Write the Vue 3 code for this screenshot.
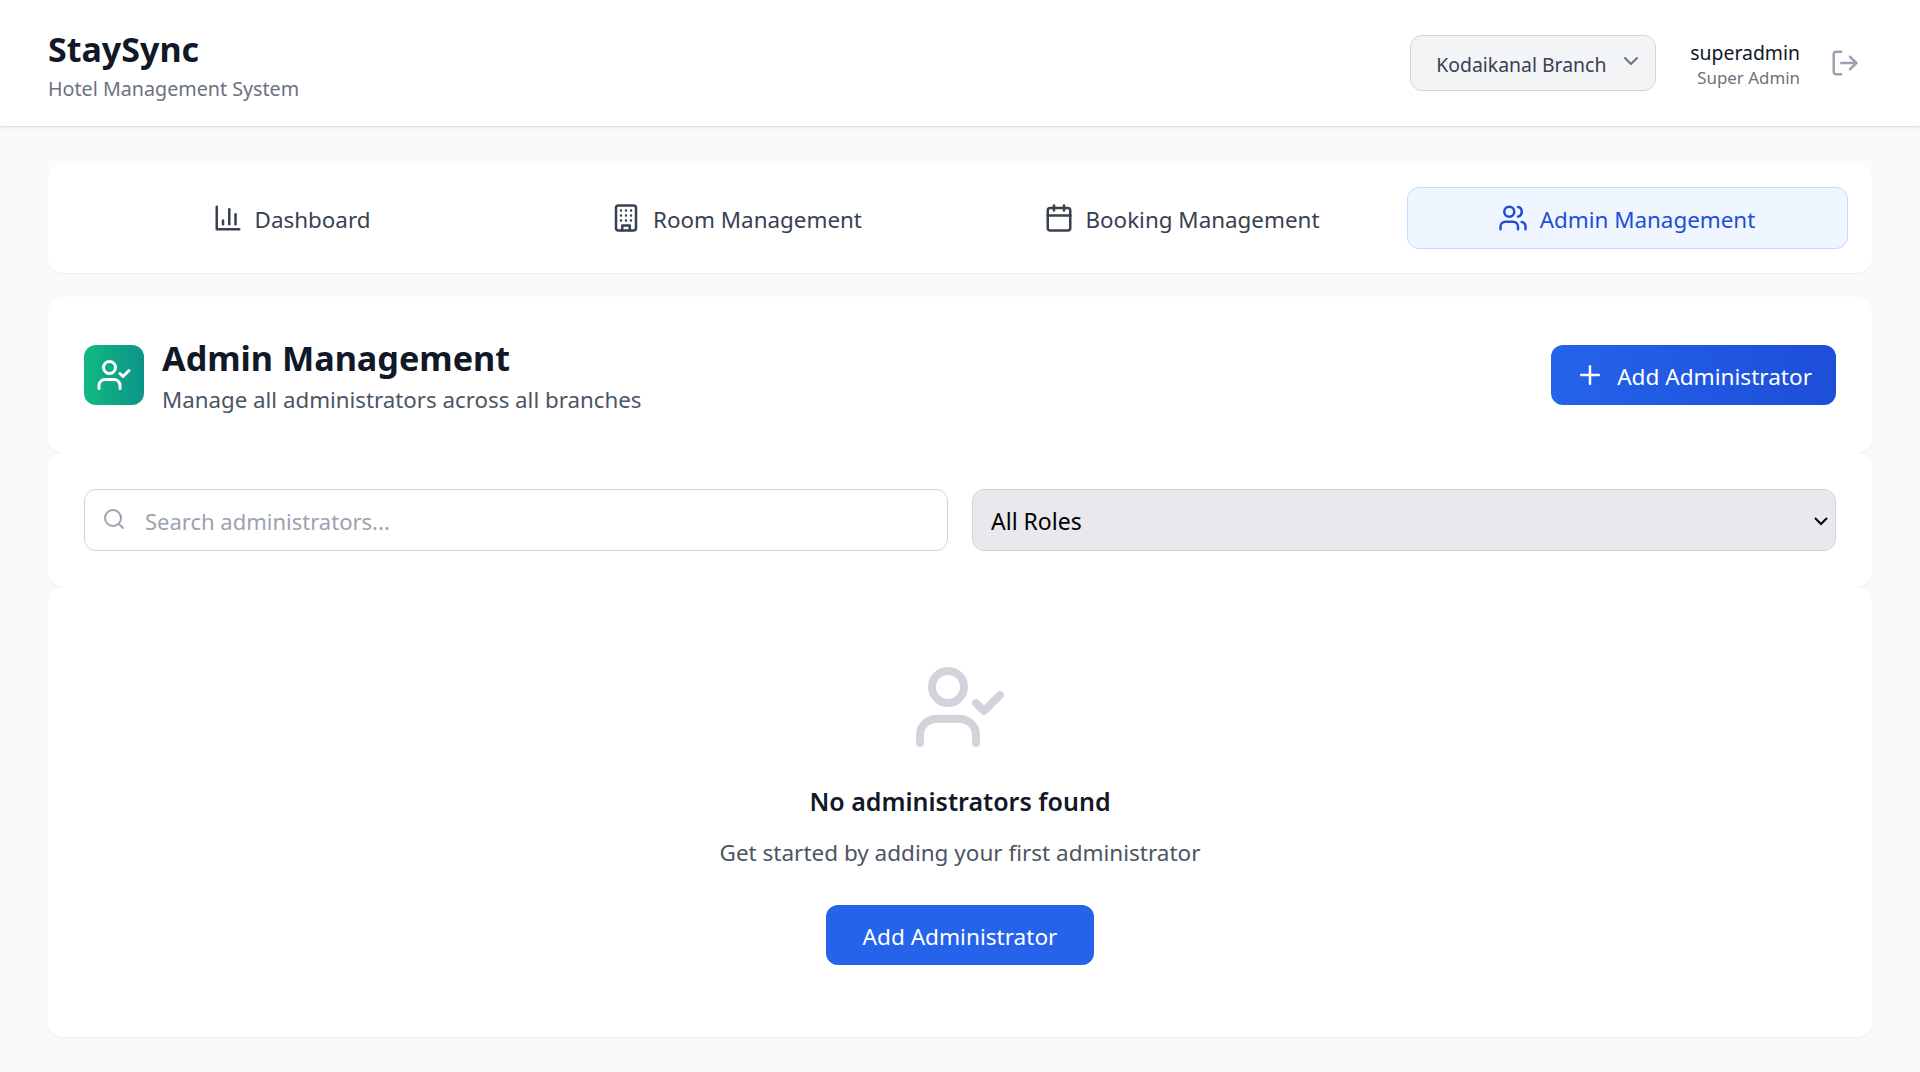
<template>
  <div class="page">
    <header class="topbar">
      <div class="brand">
        <h1>StaySync</h1>
        <p>Hotel Management System</p>
      </div>
      <div class="top-right">
        <button class="branch">
          <span>Kodaikanal Branch</span>
          <svg class="branch-chevron" viewBox="0 0 24 24"><path d="m6 9 6 6 6-6" /></svg>
        </button>
        <div class="user">
          <div class="user-name">superadmin</div>
          <div class="user-role">Super Admin</div>
        </div>
        <svg class="logout" viewBox="0 0 24 24">
          <path d="M9 21H5a2 2 0 0 1-2-2V5a2 2 0 0 1 2-2h4" />
          <polyline points="16 17 21 12 16 7" />
          <line x1="21" y1="12" x2="9" y2="12" />
        </svg>
      </div>
    </header>

    <main class="content">
      <nav class="card tabs">
        <a v-for="tab in tabs" :key="tab.label" class="tab" :class="{ active: tab.active }">
          <svg class="tab-icon" viewBox="0 0 24 24" v-html="tab.icon"></svg>
          <span>{{ tab.label }}</span>
        </a>
      </nav>

      <section class="sections">
        <div class="card title-card">
          <div class="title-left">
            <div class="title-icon">
              <svg viewBox="0 0 24 24">
                <path d="M16 21v-2a4 4 0 0 0-4-4H6a4 4 0 0 0-4 4v2" />
                <circle cx="9" cy="7" r="4" />
                <polyline points="16 11 18 13 22 9" />
              </svg>
            </div>
            <div>
              <h2>Admin Management</h2>
              <p>Manage all administrators across all branches</p>
            </div>
          </div>
          <button class="btn btn-gradient">
            <svg viewBox="0 0 24 24"><path d="M5 12h14M12 5v14" /></svg>
            <span>Add Administrator</span>
          </button>
        </div>

        <div class="card filter-card">
          <div class="search">
            <svg viewBox="0 0 24 24"><circle cx="11" cy="11" r="8" /><path d="m21 21-4.3-4.3" /></svg>
            <input type="text" placeholder="Search administrators..." />
          </div>
          <div class="role-wrap">
            <select class="role-select">
              <option>All Roles</option>
            </select>
            <svg class="role-chevron" viewBox="0 0 16 16"><path d="M2 5l6 6 6-6" /></svg>
          </div>
        </div>

        <div class="card empty-card">
          <svg class="empty-icon" viewBox="0 0 24 24">
            <path d="M16 21v-2a4 4 0 0 0-4-4H6a4 4 0 0 0-4 4v2" />
            <circle cx="9" cy="7" r="4" />
            <polyline points="16 11 18 13 22 9" />
          </svg>
          <h3>No administrators found</h3>
          <p>Get started by adding your first administrator</p>
          <button class="btn btn-flat"><span>Add Administrator</span></button>
        </div>
      </section>
    </main>
  </div>
</template>

<script setup>
const tabs = [
  {
    label: 'Dashboard',
    icon: '<path d="M3 3v18h18"/><path d="M18 17V9"/><path d="M13 17V5"/><path d="M8 17v-3"/>'
  },
  {
    label: 'Room Management',
    icon: '<rect x="4" y="2" width="16" height="20" rx="2"/><path d="M9 22v-4h6v4"/><path d="M8 6h.01M16 6h.01M12 6h.01M12 10h.01M12 14h.01M16 10h.01M16 14h.01M8 10h.01M8 14h.01"/>'
  },
  {
    label: 'Booking Management',
    icon: '<rect x="3" y="4" width="18" height="18" rx="2"/><line x1="16" y1="2" x2="16" y2="6"/><line x1="8" y1="2" x2="8" y2="6"/><line x1="3" y1="10" x2="21" y2="10"/>'
  },
  {
    label: 'Admin Management',
    active: true,
    icon: '<path d="M16 21v-2a4 4 0 0 0-4-4H6a4 4 0 0 0-4 4v2"/><circle cx="9" cy="7" r="4"/><path d="M22 21v-2a4 4 0 0 0-3-3.87"/><path d="M16 3.13a4 4 0 0 1 0 7.75"/>'
  }
]
</script>

<style>
html,
body {
  margin: 0;
  background: #f9fafb;
}
</style>

<style scoped>
* {
  box-sizing: border-box;
}

.page {
  min-height: 1072px;
  background: #f9fafb;
  font-family: "Noto Sans", "Open Sans", sans-serif;
  color: #111827;
}

svg {
  fill: none;
  stroke: currentColor;
  stroke-width: 2;
  stroke-linecap: round;
  stroke-linejoin: round;
  flex-shrink: 0;
}

.topbar {
  height: 126px;
  padding: 0 48px;
  background: #fff;
  display: flex;
  align-items: center;
  justify-content: space-between;
  box-shadow: 0 1px 3px rgba(0, 0, 0, 0.1), 0 1px 2px rgba(0, 0, 0, 0.06);
}

.brand {
  margin-top: 2px;
}

.brand h1 {
  margin: 0 0 5px;
  font-size: 34px;
  line-height: 44px;
  font-weight: 700;
  color: #111827;
}

.brand p {
  margin: 0;
  font-size: 19.7px;
  line-height: 26px;
  color: #6b7280;
}

.top-right {
  display: flex;
  align-items: center;
}

.branch {
  width: 246px;
  height: 56px;
  padding: 2px 12px 0 25px;
  display: flex;
  align-items: center;
  justify-content: space-between;
  background: #f3f4f6;
  border: 1px solid #d1d5db;
  border-radius: 12px;
  font: inherit;
  font-size: 19.4px;
  color: #374151;
}

.branch-chevron {
  width: 24px;
  height: 24px;
  margin-top: -6px;
  color: #6b7280;
}

.user {
  margin: 4px 0 0 34px;
  text-align: right;
}

.user-name {
  font-size: 19.4px;
  line-height: 26px;
  color: #111827;
}

.user-role {
  font-size: 16.9px;
  line-height: 24px;
  color: #6b7280;
}

.logout {
  width: 30px;
  height: 30px;
  margin: 0 12px 0 30px;
  color: #9ca3af;
}

.content {
  padding: 37px 48px 35px;
}

.card {
  background: #fff;
  border-radius: 15px;
  box-shadow: 0 1px 2px rgba(0, 0, 0, 0.05);
}

.tabs {
  height: 110px;
  padding: 24px;
  display: flex;
  gap: 4px;
}

.tab {
  flex: 1;
  display: flex;
  align-items: center;
  justify-content: center;
  gap: 12px;
  padding-right: 2px;
  font-size: 22.4px;
  color: #374151;
  border: 1px solid transparent;
  border-radius: 12px;
}

.tab span {
  padding-top: 2px;
}

.tab.active {
  background: #eff6ff;
  border-color: #bfdbfe;
  color: #1d4ed8;
}

.tab-icon {
  width: 30px;
  height: 30px;
}

.sections {
  margin-top: 24px;
}

.title-card {
  padding: 36px;
  display: flex;
  align-items: center;
  justify-content: space-between;
}

.title-left {
  display: flex;
  align-items: center;
  gap: 18px;
}

.title-icon {
  width: 60px;
  height: 60px;
  border-radius: 12px;
  background: linear-gradient(90deg, #10b981, #0d9488);
  display: flex;
  align-items: center;
  justify-content: center;
  color: #fff;
}

.title-icon svg {
  width: 36px;
  height: 36px;
}

.title-left h2 {
  margin: 0;
  font-size: 34.2px;
  line-height: 50px;
  font-weight: 700;
  color: #111827;
}

.title-left p {
  margin: 0;
  font-size: 22.3px;
  line-height: 34px;
  color: #4b5563;
}

.btn {
  height: 60px;
  padding: 0 24px;
  display: inline-flex;
  align-items: center;
  gap: 12px;
  border: none;
  border-radius: 12px;
  font: inherit;
  font-size: 22.6px;
  color: #fff;
}

.btn span {
  padding-top: 2px;
}

.btn-gradient {
  background: linear-gradient(90deg, #2563eb, #1d4ed8);
}

.btn-gradient svg {
  width: 30px;
  height: 30px;
}

.btn-flat {
  padding: 0 36.5px;
  background: #2563eb;
}

.filter-card {
  padding: 36px;
  display: grid;
  grid-template-columns: minmax(0, 1fr) minmax(0, 1fr);
  gap: 24px;
}

.search,
.role-wrap {
  position: relative;
}

.search svg {
  position: absolute;
  left: 18px;
  top: 18px;
  width: 24px;
  height: 24px;
  color: #9ca3af;
}

.search input {
  width: 100%;
  height: 62px;
  padding: 2px 18px 0 60px;
  border: 1px solid #d1d5db;
  border-radius: 12px;
  font: inherit;
  font-size: 22px;
  outline: none;
}

.search input::placeholder {
  color: #9ca3af;
}

.role-select {
  width: 100%;
  height: 62px;
  padding: 2px 40px 0 18px;
  appearance: none;
  border: 1px solid #d1d5db;
  border-radius: 12px;
  background-color: #e9e8ed;
  font: inherit;
  font-size: 23px;
  color: #000;
}

.role-chevron {
  position: absolute;
  right: 7px;
  top: 24px;
  width: 16px;
  height: 16px;
  color: #000;
  stroke-linecap: butt;
  stroke-linejoin: miter;
  pointer-events: none;
}

.empty-card {
  padding: 72px 36px;
  display: flex;
  flex-direction: column;
  align-items: center;
}

.empty-icon {
  width: 96px;
  height: 96px;
  color: #d1d5db;
}

.empty-card h3 {
  margin: 28px 0 0;
  font-size: 25px;
  line-height: 36px;
  font-weight: 600;
  color: #111827;
}

.empty-card p {
  margin: 16px 0 0;
  font-size: 22.5px;
  line-height: 36px;
  color: #4b5563;
}

.empty-card .btn {
  margin-top: 34px;
}
</style>
